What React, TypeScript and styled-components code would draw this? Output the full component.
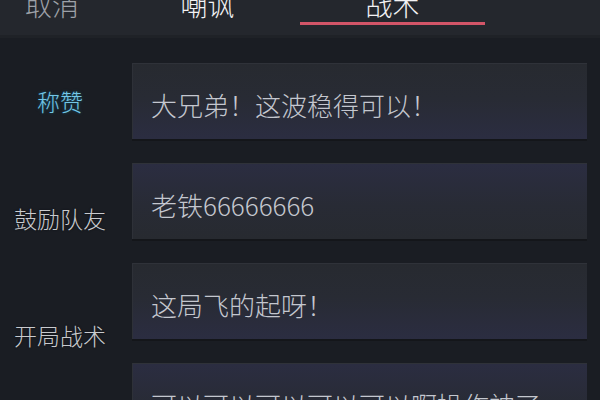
import styled, { createGlobalStyle } from "styled-components";

const GlobalStyle = createGlobalStyle`
  html, body {
    margin: 0;
    padding: 0;
    background: #1a1d23;
    font-family: "Noto Sans CJK SC", "Noto Sans", sans-serif;
  }
`;

const tabs = [
  { label: "嘲讽", active: false },
  { label: "战术", active: true },
];

const labels = [
  { text: "称赞", highlight: true },
  { text: "鼓励队友", highlight: false },
  { text: "开局战术", highlight: false },
];

const phrases = [
  { text: "大兄弟！这波稳得可以！", tint: "low" as const },
  { text: "老铁66666666", tint: "high" as const },
  { text: "这局飞的起呀！", tint: "low" as const },
  { text: "可以可以可以可以可以啊操作神了", tint: "high" as const },
];

export default function App() {
  return (
    <Page>
      <GlobalStyle />
      <Header>
        <Cancel>取消</Cancel>
        {tabs.map((tab) => (
          <Tab key={tab.label} $active={tab.active}>
            <TabText>{tab.label}</TabText>
          </Tab>
        ))}
      </Header>
      <Body>
        <LabelColumn>
          {labels.map((item) => (
            <Label key={item.text} $highlight={item.highlight}>
              {item.text}
            </Label>
          ))}
        </LabelColumn>
        <FieldColumn>
          {phrases.map((item) => (
            <Field key={item.text} $tint={item.tint}>
              {item.text}
            </Field>
          ))}
        </FieldColumn>
      </Body>
    </Page>
  );
}

const Page = styled.div`
  width: 600px;
  height: 400px;
  overflow: hidden;
  background: #1a1d23;
`;

const Header = styled.div`
  height: 35px;
  display: flex;
  align-items: flex-start;
  background: #24272d;
  border-bottom: 3px solid #1f2227;
  overflow: hidden;
`;

const Cancel = styled.div`
  width: 115px;
  box-sizing: border-box;
  padding-left: 25px;
  margin-top: -9px;
  font-size: 27px;
  font-weight: 300;
  line-height: 27px;
  color: #9da1a8;
`;

const Tab = styled.div<{ $active: boolean }>`
  width: 185px;
  height: 25px;
  box-sizing: border-box;
  display: flex;
  justify-content: center;
  border-bottom: 3px solid ${(p) => (p.$active ? "#d25568" : "transparent")};
`;

const TabText = styled.span`
  margin-top: -9px;
  font-size: 27px;
  font-weight: 300;
  line-height: 27px;
  color: #f2f2f4;
`;

const Body = styled.div`
  display: grid;
  grid-template-columns: 120px 455px;
  column-gap: 12px;
`;

const LabelColumn = styled.div`
  display: flex;
  flex-direction: column;
  align-items: center;
  padding-top: 48px;
  gap: 87px;
`;

const Label = styled.div<{ $highlight: boolean }>`
  font-size: 23px;
  font-weight: 300;
  line-height: 30px;
  color: ${(p) => (p.$highlight ? "#74c6e6" : "#c8cace")};
  text-shadow: ${(p) =>
    p.$highlight ? "0 0 3px #1d5a6e, 0 0 1px #0d2a38" : "0 0 2px #0e1014"};
`;

const FieldColumn = styled.div`
  display: flex;
  flex-direction: column;
  padding-top: 25px;
  gap: 24px;
`;

const Field = styled.div<{ $tint: "low" | "high" }>`
  height: 76px;
  box-sizing: border-box;
  display: flex;
  align-items: center;
  padding: 6px 18px 0;
  font-size: 26px;
  font-weight: 300;
  color: #c4c7cf;
  white-space: nowrap;
  border-top: 1px solid #2f3239;
  border-left: 1px solid #2e3138;
  box-shadow: 0 2px 0 #14161a;
  background: ${(p) =>
    p.$tint === "low"
      ? "linear-gradient(180deg, #272a30 0%, #282b34 45%, #2b2d41 100%)"
      : "linear-gradient(180deg, #2b2d41 0%, #282b35 55%, #272a30 100%)"};
`;
